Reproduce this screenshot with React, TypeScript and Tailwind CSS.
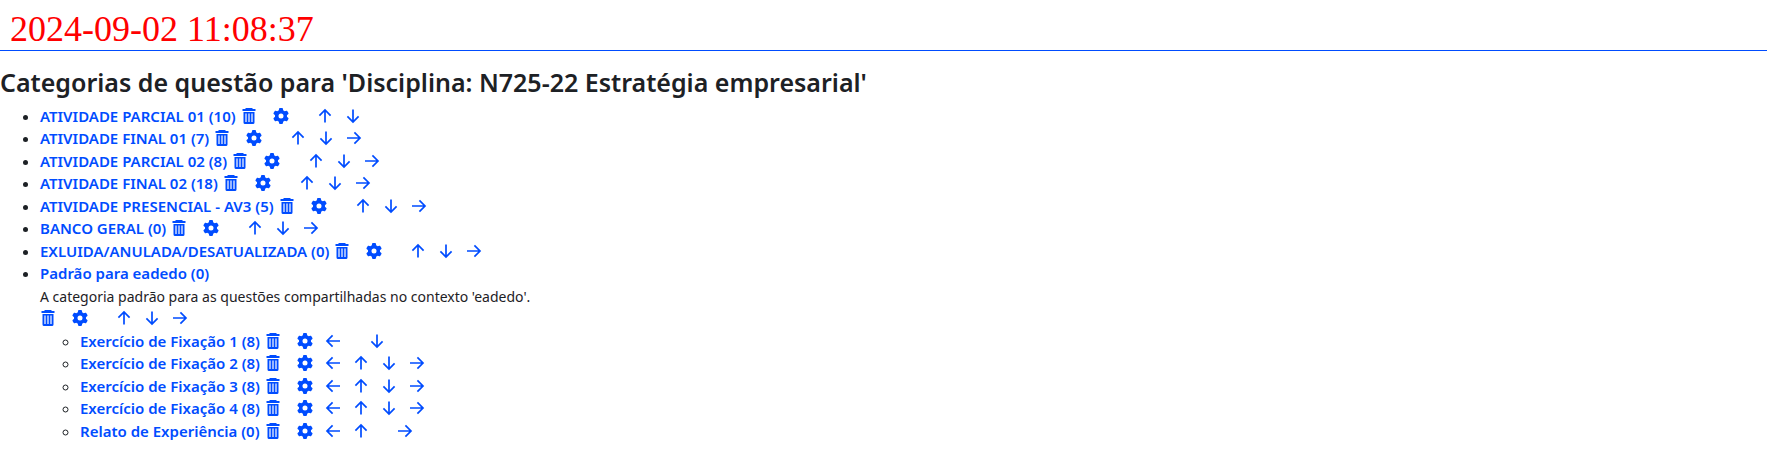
import React from "react";
import { FaGear } from "react-icons/fa6";

type Direction = "left" | "up" | "down" | "right";

interface Category {
  name: string;
  description?: string;
  moves: Direction[];
  children?: Category[];
}

const categories: Category[] = [
  { name: "ATIVIDADE PARCIAL 01 (10)", moves: ["up", "down"] },
  { name: "ATIVIDADE FINAL 01 (7)", moves: ["up", "down", "right"] },
  { name: "ATIVIDADE PARCIAL 02 (8)", moves: ["up", "down", "right"] },
  { name: "ATIVIDADE FINAL 02 (18)", moves: ["up", "down", "right"] },
  { name: "ATIVIDADE PRESENCIAL - AV3 (5)", moves: ["up", "down", "right"] },
  { name: "BANCO GERAL (0)", moves: ["up", "down", "right"] },
  { name: "EXLUIDA/ANULADA/DESATUALIZADA (0)", moves: ["up", "down", "right"] },
  {
    name: "Padrão para eadedo (0)",
    description: "A categoria padrão para as questões compartilhadas no contexto 'eadedo'.",
    moves: ["up", "down", "right"],
    children: [
      { name: "Exercício de Fixação 1 (8)", moves: ["left", "down"] },
      { name: "Exercício de Fixação 2 (8)", moves: ["left", "up", "down", "right"] },
      { name: "Exercício de Fixação 3 (8)", moves: ["left", "up", "down", "right"] },
      { name: "Exercício de Fixação 4 (8)", moves: ["left", "up", "down", "right"] },
      { name: "Relato de Experiência (0)", moves: ["left", "up", "right"] },
    ],
  },
];

const directions: Direction[] = ["left", "up", "down", "right"];

const arrowPaths: Record<Direction, string> = {
  left: "M15 8H2.4M7.6 2.4L2 8l5.6 5.6",
  up: "M8 14.5V2.4M2.4 7.6L8 2l5.6 5.6",
  down: "M8 1.5V13.6M2.4 8.4L8 14l5.6-5.6",
  right: "M1 8h12.6M8.4 2.4L14 8l-5.6 5.6",
};

const arrowLabels: Record<Direction, string> = {
  left: "Mover para a esquerda",
  up: "Mover para cima",
  down: "Mover para baixo",
  right: "Mover para a direita",
};

function TrashIcon() {
  return (
    <svg viewBox="0 0 16 16" className="size-4" aria-hidden="true">
      <path
        fill="currentColor"
        fillRule="evenodd"
        d="M4.500 0h7v1h3v2h-13v-2h3zM2.500 4h11v10.500q0 1.500-1.500 1.500h-8q-1.500 0-1.500-1.500zM4.400 5.500v8.500h1.200v-8.500zM7.400 5.500v8.500h1.200v-8.500zM10.400 5.500v8.500h1.200v-8.500z"
      />
    </svg>
  );
}

function ArrowIcon({ direction }: { direction: Direction }) {
  return (
    <svg viewBox="0 0 16 16" className="size-4" fill="none" stroke="currentColor" strokeWidth="1.7" aria-hidden="true">
      <path d={arrowPaths[direction]} />
    </svg>
  );
}

function Actions({ moves }: { moves: Direction[] }) {
  const last = directions.indexOf(moves[moves.length - 1]);
  return (
    <span className="flex items-center gap-3 text-[#004cff]">
      <a href="#excluir" aria-label="Excluir" className="mr-1">
        <TrashIcon />
      </a>
      <a href="#editar" aria-label="Editar">
        <FaGear className="size-4" />
      </a>
      {directions.slice(0, last + 1).map((direction) =>
        moves.includes(direction) ? (
          <a key={direction} href="#mover" aria-label={arrowLabels[direction]}>
            <ArrowIcon direction={direction} />
          </a>
        ) : (
          <span key={direction} className="w-1" />
        ),
      )}
    </span>
  );
}

function CategoryItem({ category }: { category: Category }) {
  const link = (
    <a href="#categoria" className="font-semibold text-[#004cff]">
      {category.name}
    </a>
  );
  return (
    <li>
      {category.description ? (
        <>
          {link}
          <p>
            <span className="text-sm">{category.description}</span>
          </p>
          <div className="flex h-[1lh] items-center">
            <Actions moves={category.moves} />
          </div>
        </>
      ) : (
        <div className="inline-flex h-[1lh] items-center gap-[5px] align-top">
          {link}
          <Actions moves={category.moves} />
        </div>
      )}
      {category.children && (
        <ul className="list-[circle] pl-10">
          {category.children.map((child) => (
            <CategoryItem key={child.name} category={child} />
          ))}
        </ul>
      )}
    </li>
  );
}

export default function App() {
  return (
    <div className="min-h-screen bg-white pb-6 font-['Noto_Sans',sans-serif] text-[15px] leading-normal text-[#1d2125]">
      <header className="border-b border-[#004cff] px-2.5 pt-2 font-['Liberation_Serif',serif] text-4xl leading-[42px] text-[#ff0000]">
        <time dateTime="2024-09-02T11:08:37">2024-09-02 11:08:37</time>
      </header>
      <main>
        <h1 className="mt-[15px] mb-1.5 text-[25px] leading-[1.3] font-semibold">
          Categorias de questão para 'Disciplina: N725-22 Estratégia empresarial'
        </h1>
        <ul className="list-disc pl-10">
          {categories.map((category) => (
            <CategoryItem key={category.name} category={category} />
          ))}
        </ul>
      </main>
    </div>
  );
}
